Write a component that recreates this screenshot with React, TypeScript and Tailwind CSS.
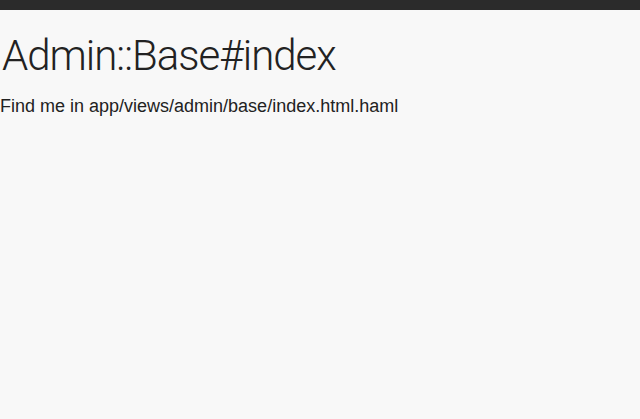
export default function App() {
  return (
    <div className="flex min-h-[419px] w-full flex-col bg-[#f8f8f8] text-[#222]">
      <div className="h-[10px] w-full bg-[#2b2b2b]" />
      <h1 className="mt-[25px] pl-[2px] font-['Roboto',sans-serif] text-[42px] leading-[42px] font-light tracking-[-1px]">
        Admin::Base#index
      </h1>
      <p className="mt-[19px] font-['Liberation_Sans',Arial,sans-serif] text-[18px] leading-[20px]">
        Find me in app/views/admin/base/index.html.haml
      </p>
    </div>
  );
}
